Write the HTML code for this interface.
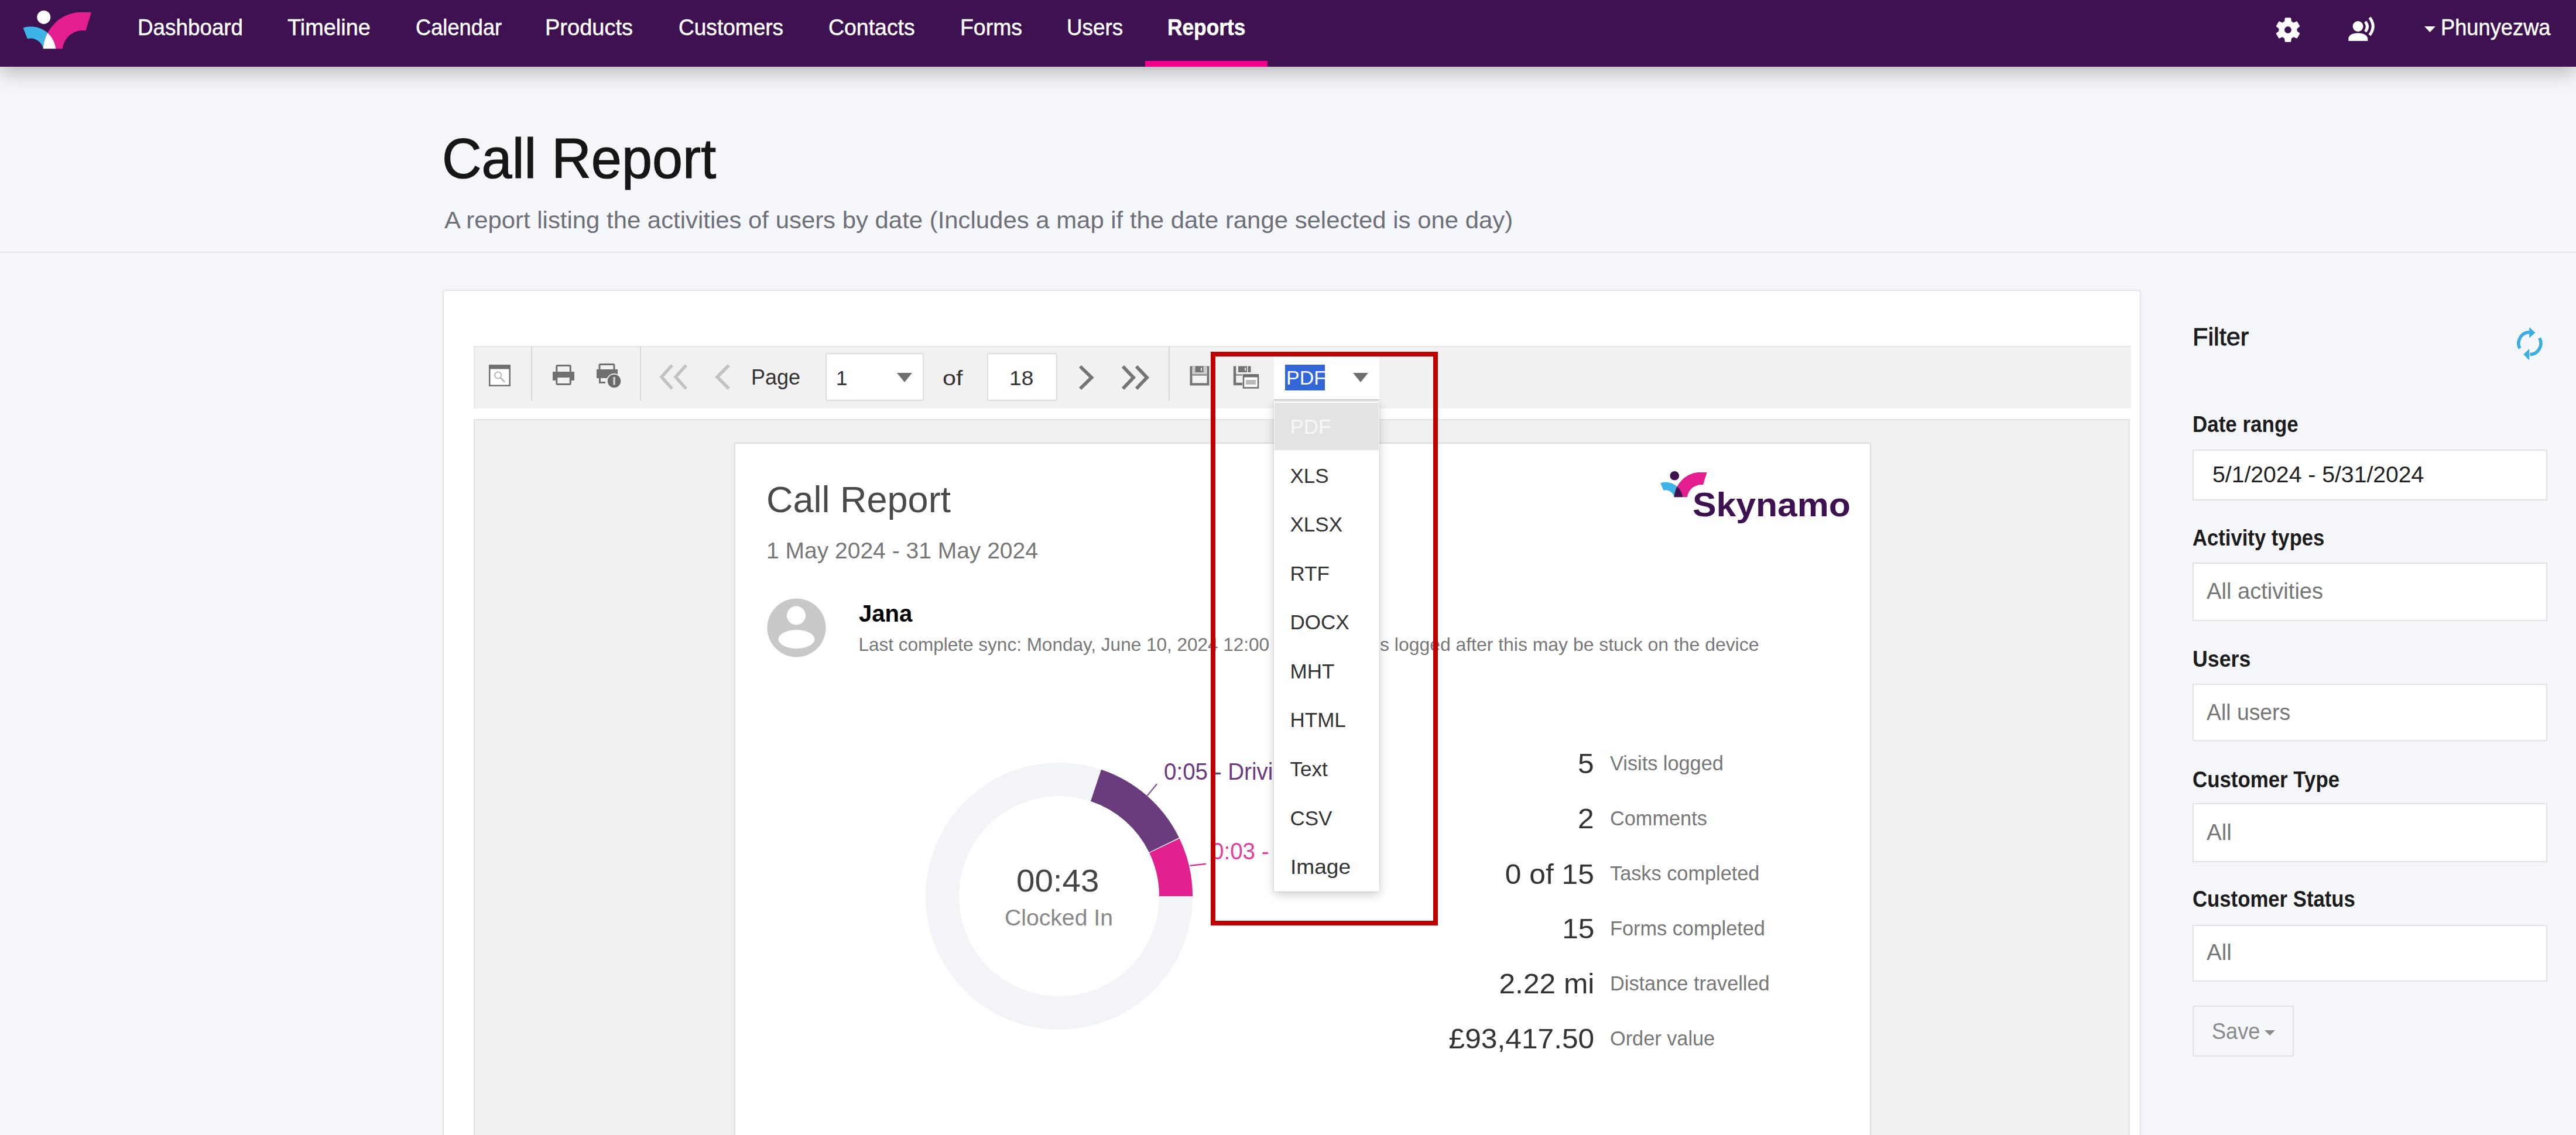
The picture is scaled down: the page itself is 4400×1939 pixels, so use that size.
<!DOCTYPE html>
<html><head><meta charset="utf-8">
<style>
html,body{margin:0;padding:0;width:4400px;height:1939px;overflow:hidden;background:#f5f6fa;font-family:"Liberation Sans",sans-serif;}
.a{position:absolute;white-space:nowrap;line-height:1;}
.sx{transform-origin:0 0;}
#nav{position:absolute;left:0;top:0;width:4400px;height:114px;background:#3e1150;box-shadow:0 7px 34px rgba(0,0,0,0.30);z-index:5;}
.nv{position:absolute;top:27.4px;font-size:39.5px;color:#fff;line-height:1;white-space:nowrap;transform-origin:0 0;-webkit-text-stroke:0.5px #fff;}
.lbl{position:absolute;left:3746px;font-size:38px;font-weight:bold;color:#1c1c1c;line-height:1;white-space:nowrap;transform-origin:0 0;}
.inp{position:absolute;left:3745px;width:606px;background:#fff;border:2px solid #e1e2e6;box-sizing:border-box;}
.inpt{position:absolute;font-size:38px;color:#767676;line-height:1;white-space:nowrap;transform-origin:0 0;}
.dd{position:absolute;left:2204px;font-size:35px;color:#333;line-height:1;white-space:nowrap;}
.st{position:absolute;font-size:43px;color:#333;line-height:1;white-space:nowrap;text-align:right;right:1680px;}
.sl{position:absolute;left:2750px;font-size:35px;color:#777;line-height:1;white-space:nowrap;}
</style></head>
<body>
<!-- NAV -->
<div id="nav">
  <svg class="a" style="left:0;top:0" width="180" height="113" viewBox="0 0 180 113">
    <defs><clipPath id="cbn"><path d="M39.4 47.6 A42.6 42.6 0 0 1 95.2 83.2 L73.8 83.2 A22 22 0 0 0 46.9 66.2 Z"/></clipPath></defs>
    <path d="M39.4 47.6 A42.6 42.6 0 0 1 95.2 83.2 L73.8 83.2 A22 22 0 0 0 46.9 66.2 Z" fill="#3db4e5"/>
    <path d="M73.8 83.2 A66.9 66.9 0 0 1 132.5 20.9 L156 20.9 L146.5 52.3 A35 35 0 0 0 106.7 83.2 Z" fill="#e51e90"/>
    <path d="M73.8 83.2 A66.9 66.9 0 0 1 132.5 20.9 L156 20.9 L146.5 52.3 A35 35 0 0 0 106.7 83.2 Z" fill="#fff" clip-path="url(#cbn)"/>
    <circle cx="74.8" cy="29.4" r="11.5" fill="#fff"/>
  </svg>
  <div class="nv" style="left:234.5px;transform:scaleX(0.9320)">Dashboard</div>
  <div class="nv" style="left:491px;transform:scaleX(0.9597)">Timeline</div>
  <div class="nv" style="left:710px;transform:scaleX(0.9183)">Calendar</div>
  <div class="nv" style="left:931px;transform:scaleX(0.9627)">Products</div>
  <div class="nv" style="left:1159px;transform:scaleX(0.9380)">Customers</div>
  <div class="nv" style="left:1415px;transform:scaleX(0.9478)">Contacts</div>
  <div class="nv" style="left:1640px;transform:scaleX(0.9478)">Forms</div>
  <div class="nv" style="left:1821.5px;transform:scaleX(0.9330)">Users</div>
  <div class="nv" style="left:1994px;font-weight:bold;transform:scaleX(0.8936)">Reports</div>
  <div class="a" style="left:1956px;top:104px;width:209px;height:10px;background:#ec008c"></div>
  <!-- gear -->
  <svg class="a" style="left:3882px;top:25px" width="52" height="52" viewBox="0 0 24 24">
    <path fill="#fff" d="M19.14 12.94c.04-.3.06-.61.06-.94 0-.32-.02-.64-.07-.94l2.03-1.58a.49.49 0 0 0 .12-.61l-1.92-3.32a.488.488 0 0 0-.59-.22l-2.39.96c-.5-.38-1.03-.7-1.62-.94l-.36-2.54a.484.484 0 0 0-.48-.41h-3.84c-.24 0-.43.17-.47.41l-.36 2.54c-.59.24-1.13.57-1.62.94l-2.39-.96c-.22-.08-.47 0-.59.22L2.74 8.87c-.12.21-.08.47.12.61l2.03 1.58c-.05.3-.09.63-.09.94s.02.64.07.94l-2.03 1.58a.49.49 0 0 0-.12.61l1.92 3.32c.12.22.37.29.59.22l2.39-.96c.5.38 1.03.7 1.62.94l.36 2.54c.05.24.24.41.48.41h3.84c.24 0 .44-.17.47-.41l.36-2.54c.59-.24 1.13-.56 1.62-.94l2.39.96c.22.08.47 0 .59-.22l1.92-3.32c.12-.22.07-.47-.12-.61l-2.01-1.58zM12 14.7c-1.49 0-2.7-1.21-2.7-2.7s1.21-2.7 2.7-2.7 2.7 1.21 2.7 2.7-1.21 2.7-2.7 2.7z"/>
  </svg>
  <!-- person voice -->
  <svg class="a" style="left:4008px;top:26px" width="52" height="48" viewBox="0 0 52 48">
    <circle cx="19.6" cy="19" r="9" fill="#fff"/>
    <path d="M3.3 44 L3.3 40 Q4 31 19.6 30.5 Q35 31 36.3 40 L36.3 44 Z" fill="#fff"/>
    <path d="M32 11 Q39 19.5 32 28" stroke="#fff" stroke-width="5" fill="none"/>
    <path d="M39.5 4 Q51 19 39.5 34" stroke="#fff" stroke-width="5" fill="none"/>
  </svg>
  <svg class="a" style="left:4141px;top:45px" width="20" height="11" viewBox="0 0 20 11"><path d="M0 0 L19 0 L9.5 10 Z" fill="#fff"/></svg>
  <div class="nv" style="left:4169px;transform:scaleX(0.9183)">Phunyezwa</div>
</div>

<!-- HEADER -->
<div class="a sx" style="left:755px;top:223px;font-size:96px;color:#161616;transform:scaleX(0.975);-webkit-text-stroke:1.2px #161616">Call Report</div>
<div class="a sx" style="left:759px;top:356px;font-size:40px;color:#6e7079;transform:scaleX(1.047)">A report listing the activities of users by date (Includes a map if the date range selected is one day)</div>
<div class="a" style="left:0;top:430px;width:4400px;height:2px;background:#e4e5e8"></div>

<!-- CARD -->
<div class="a" style="left:756px;top:495px;width:2901px;height:1500px;background:#fff;border:2px solid #e3e4e8;border-radius:5px;box-sizing:border-box"></div>

<!-- TOOLBAR -->
<div class="a" style="left:809px;top:591px;width:2831px;height:107px;background:#f1f1f1;border-top:2px solid #e4e5e7;border-left:2px solid #e4e5e7;box-sizing:border-box"></div>

<!-- toolbar contents -->
<div class="a" style="left:907px;top:593px;width:2px;height:92px;background:#d9d9d9"></div>
<div class="a" style="left:1093px;top:593px;width:2px;height:92px;background:#d9d9d9"></div>
<div class="a" style="left:1996px;top:593px;width:2px;height:92px;background:#d9d9d9"></div>
<svg class="a" style="left:835px;top:623px" width="37" height="37" viewBox="0 0 37 37">
  <rect x="1.25" y="1.25" width="34.5" height="34.5" fill="#fff" stroke="#707070" stroke-width="2.5"/>
  <rect x="0" y="0" width="37" height="7.5" fill="#707070"/>
  <circle cx="15.7" cy="18" r="5.6" fill="none" stroke="#b0b0b0" stroke-width="1.8"/>
  <path d="M19.6 22 L27 29.5" stroke="#b0b0b0" stroke-width="2.4"/>
</svg>
<svg class="a" style="left:944px;top:623px" width="37" height="35" viewBox="0 0 37 35">
  <rect x="6.8" y="1.5" width="23.5" height="13" rx="1.5" fill="none" stroke="#707070" stroke-width="3"/>
  <rect x="0" y="12" width="37" height="15" fill="#707070"/>
  <rect x="6.8" y="20.5" width="23.5" height="13" rx="1.5" fill="#f1f1f1" stroke="#707070" stroke-width="3"/>
</svg>
<svg class="a" style="left:1018px;top:619px" width="46" height="46" viewBox="0 0 46 46">
  <rect x="6" y="3.5" width="25" height="13" rx="1.5" fill="none" stroke="#707070" stroke-width="3"/>
  <rect x="1" y="12" width="36" height="15" fill="#707070"/>
  <path d="M6.5 23 L6.5 34.5 L16 34.5" fill="none" stroke="#707070" stroke-width="3"/>
  <circle cx="31" cy="32" r="13" fill="#f1f1f1"/>
  <circle cx="31" cy="32" r="11.2" fill="#6a6a6a"/>
  <rect x="29.3" y="25" width="3.6" height="13.5" fill="#d0d0d0"/>
</svg>
<svg class="a" style="left:1124px;top:622px" width="54" height="44" viewBox="0 0 54 44">
  <path d="M24 2 L6 22 L24 42" fill="none" stroke="#c2c2c2" stroke-width="5.5"/>
  <path d="M48 2 L30 22 L48 42" fill="none" stroke="#c2c2c2" stroke-width="5.5"/>
</svg>
<svg class="a" style="left:1218px;top:622px" width="32" height="44" viewBox="0 0 32 44">
  <path d="M27 2 L7 22 L27 42" fill="none" stroke="#c2c2c2" stroke-width="5.5"/>
</svg>
<div class="a" style="left:1283px;top:627px;font-size:36px;color:#333">Page</div>
<div class="a" style="left:1410px;top:603px;width:168px;height:82px;background:#fff;border:2px solid #dedede;border-radius:4px;box-sizing:border-box"></div>
<div class="a" style="left:1428px;top:628px;font-size:35px;color:#333">1</div>
<svg class="a" style="left:1532px;top:637px" width="26" height="16" viewBox="0 0 26 16"><path d="M0 0 L26 0 L13 16 Z" fill="#707070"/></svg>
<div class="a sx" style="left:1610px;top:628px;font-size:35px;color:#333;transform:scaleX(1.18)">of</div>
<div class="a" style="left:1686px;top:603px;width:120px;height:82px;background:#fff;border:2px solid #dedede;border-radius:4px;box-sizing:border-box"></div>
<div class="a sx" style="left:1723.5px;top:628px;font-size:35px;color:#333;transform:scaleX(1.06)">18</div>
<svg class="a" style="left:1840px;top:623px" width="32" height="44" viewBox="0 0 32 44">
  <path d="M5 3 L24.5 22 L5 41" fill="none" stroke="#757575" stroke-width="5.8"/>
</svg>
<svg class="a" style="left:1912px;top:623px" width="54" height="44" viewBox="0 0 54 44">
  <path d="M6 3 L24 22 L6 41" fill="none" stroke="#757575" stroke-width="5.8"/>
  <path d="M29 3 L47 22 L29 41" fill="none" stroke="#757575" stroke-width="5.8"/>
</svg>
<svg class="a" style="left:2032px;top:625px" width="34" height="34" viewBox="0 0 34 34">
  <rect x="2.5" y="2.5" width="29" height="29" fill="#f4f4f4" stroke="#747474" stroke-width="4"/>
  <rect x="4.5" y="0.5" width="25" height="14" fill="#cdcdcd"/>
  <rect x="9.5" y="0.5" width="14" height="10.5" fill="#747474"/>
  <rect x="19" y="3" width="2" height="5.5" fill="#e6e6e6"/>
  <rect x="4.5" y="14.5" width="25" height="2" fill="#747474"/>
</svg>
<svg class="a" style="left:2106px;top:625px" width="46" height="40" viewBox="0 0 46 40">
  <path d="M3 0.5 L3 31 L16 31" fill="none" stroke="#747474" stroke-width="4.5"/>
  <rect x="9" y="0.5" width="15" height="10.5" fill="#747474"/>
  <rect x="20" y="3" width="2" height="5.5" fill="#e6e6e6"/>
  <rect x="25.5" y="0.5" width="5" height="10.5" fill="#747474"/>
  <rect x="4" y="14.5" width="12" height="2" fill="#747474"/>
  <rect x="18" y="15.5" width="25" height="22" fill="#fff" stroke="#6e6e6e" stroke-width="2.5"/>
  <rect x="17" y="14.5" width="27" height="5" fill="#6e6e6e"/>
  <rect x="22" y="24" width="17" height="8" fill="#b8b8b8"/>
</svg>
<!-- export select -->
<div class="a" style="left:2176px;top:603px;width:180px;height:79px;background:#fff"></div>
<div class="a" style="left:2195px;top:623px;width:68px;height:44px;background:#3366d6"></div>
<div class="a" style="left:2197px;top:628px;font-size:34px;color:#fff">PDF</div>
<svg class="a" style="left:2311px;top:637px" width="26" height="16" viewBox="0 0 26 16"><path d="M0 0 L26 0 L13 16 Z" fill="#707070"/></svg>

<!-- VIEWER -->
<div class="a" style="left:809px;top:716px;width:2829px;height:1300px;background:#f0f0f0;border:2px solid #e2e3e6;box-sizing:border-box"></div>
<div class="a" style="left:1253.5px;top:755.5px;width:1942px;height:1300px;background:#fff;border:2px solid #dcdcdc;border-radius:3px;box-sizing:border-box;box-shadow:0 0 2px rgba(0,0,0,0.05)"></div>

<!-- REPORT PAGE CONTENT -->
<div class="a sx" style="left:1309.0px;top:822.1px;font-size:63px;color:#4a4a4a;">Call Report</div>
<div class="a sx" style="left:1309.0px;top:920.8px;font-size:39px;color:#777;">1 May 2024 - 31 May 2024</div>
<svg class="a" style="left:1310px;top:1022px" width="101" height="101" viewBox="0 0 101 101">
  <defs><clipPath id="avc"><circle cx="50.5" cy="50.5" r="50"/></clipPath></defs>
  <circle cx="50.5" cy="50.5" r="50" fill="#c8c8c8"/>
  <g clip-path="url(#avc)">
    <circle cx="50" cy="29.5" r="16" fill="#fff"/>
    <ellipse cx="50.5" cy="70" rx="31" ry="16" fill="#fff"/>
  </g>
</svg>
<div class="a sx" style="left:1467.0px;top:1027.6px;font-size:40px;color:#000;font-weight:bold;">Jana</div>
<div class="a sx" style="left:1466.5px;top:1086.3px;font-size:31.5px;color:#777;">Last complete sync: Monday, June 10, 2024 12:00</div>
<div class="a sx" style="left:2356.5px;top:1086.3px;font-size:31.5px;color:#777;transform:scaleX(1.013);">s logged after this may be stuck on the device</div>
<!-- skynamo logo -->
<svg class="a" style="left:2826px;top:796px" width="100" height="60" viewBox="0 0 100 60">
  <defs><clipPath id="cbr"><path d="M39.4 47.6 A42.6 42.6 0 0 1 95.2 83.2 L73.8 83.2 A22 22 0 0 0 46.9 66.2 Z"/></clipPath></defs>
  <g transform="translate(-16.59 -3.21) scale(0.68)">
    <path d="M39.4 47.6 A42.6 42.6 0 0 1 95.2 83.2 L73.8 83.2 A22 22 0 0 0 46.9 66.2 Z" fill="#3db4e5"/>
    <path d="M73.8 83.2 A66.9 66.9 0 0 1 132.5 20.9 L156 20.9 L146.5 52.3 A35 35 0 0 0 106.7 83.2 Z" fill="#e51e90"/>
    <path d="M73.8 83.2 A66.9 66.9 0 0 1 132.5 20.9 L156 20.9 L146.5 52.3 A35 35 0 0 0 106.7 83.2 Z" fill="#3e1150" clip-path="url(#cbr)"/>
    <circle cx="74.8" cy="29.4" r="11.5" fill="#3e1150"/>
  </g>
</svg>
<div class="a sx" style="left:2891.0px;top:834.3px;font-size:57px;color:#3e1150;font-weight:bold;transform:scaleX(1.065);">Skynamo</div>
<!-- donut -->
<svg class="a" style="left:1560px;top:1280px" width="600" height="500" viewBox="1560 1280 600 500">
  <circle cx="1809" cy="1531" r="199.5" fill="none" stroke="#f3f4f8" stroke-width="57"/>
  <path id="arcP" d="" fill="#6a3b7d"/>
  <path id="arcK" d="" fill="#e3208f"/>
  <path d="M1959.4 1359.6 L1976.1 1339.3" stroke="#7d5590" stroke-width="2.2"/>
  <path d="M2032.5 1478.9 L2059.8 1475.9" stroke="#e3208f" stroke-width="2.2"/>
</svg>
<div class="a sx" style="left:1987.5px;top:1297.6px;font-size:41px;color:#6a3b7d;transform:scaleX(0.94);">0:05 - Driving</div>
<div class="a sx" style="left:2069.0px;top:1434.2px;font-size:41px;color:#e0409a;transform:scaleX(0.94);">0:03 - Break</div>
<div class="a sx" style="left:1736.0px;top:1477.6px;font-size:53px;color:#444;transform:scaleX(1.066);">00:43</div>
<div class="a sx" style="left:1715.5px;top:1548.5px;font-size:38px;color:#888;transform:scaleX(1.03);">Clocked In</div>
<!-- stats -->
<div class="a" style="right:1677px;top:1281.4px;font-size:48px;color:#333;text-align:right;transform:scaleX(1.035);transform-origin:100% 0;">5</div>
<div class="a sx" style="left:2750.0px;top:1286.5px;font-size:34.3px;color:#777;">Visits logged</div>
<div class="a" style="right:1677px;top:1375.4px;font-size:48px;color:#333;text-align:right;transform:scaleX(1.035);transform-origin:100% 0;">2</div>
<div class="a sx" style="left:2750.0px;top:1380.5px;font-size:34.3px;color:#777;">Comments</div>
<div class="a" style="right:1677px;top:1469.9px;font-size:48px;color:#333;text-align:right;transform:scaleX(1.035);transform-origin:100% 0;">0 of 15</div>
<div class="a sx" style="left:2750.0px;top:1475.0px;font-size:34.3px;color:#777;">Tasks completed</div>
<div class="a" style="right:1677px;top:1563.4px;font-size:48px;color:#333;text-align:right;transform:scaleX(1.035);transform-origin:100% 0;">15</div>
<div class="a sx" style="left:2750.0px;top:1568.5px;font-size:34.3px;color:#777;">Forms completed</div>
<div class="a" style="right:1677px;top:1657.4px;font-size:48px;color:#333;text-align:right;transform:scaleX(1.035);transform-origin:100% 0;">2.22 mi</div>
<div class="a sx" style="left:2750.0px;top:1662.5px;font-size:34.3px;color:#777;">Distance travelled</div>
<div class="a" style="right:1677px;top:1751.4px;font-size:48px;color:#333;text-align:right;transform:scaleX(1.035);transform-origin:100% 0;">£93,417.50</div>
<div class="a sx" style="left:2750.0px;top:1756.5px;font-size:34.3px;color:#777;">Order value</div>
<!-- DROPDOWN -->
<div class="a" style="left:2176px;top:682px;width:180px;height:2px;background:#d6d6d6"></div>
<div class="a" style="left:2176px;top:686px;width:180px;height:837px;background:#fff;box-shadow:0 0 1.5px rgba(0,0,0,0.22),0 5px 16px rgba(0,0,0,0.20)"></div>
<div class="a" style="left:2177px;top:688px;width:178px;height:81px;background:#e3e3e3"></div>
<div class="a sx" style="left:2203.5px;top:711.1px;font-size:35px;color:#f7f7f7;">PDF</div>
<div class="a sx" style="left:2203.5px;top:794.6px;font-size:35px;color:#333;">XLS</div>
<div class="a sx" style="left:2203.5px;top:878.2px;font-size:35px;color:#333;">XLSX</div>
<div class="a sx" style="left:2203.5px;top:961.7px;font-size:35px;color:#333;">RTF</div>
<div class="a sx" style="left:2203.5px;top:1045.3px;font-size:35px;color:#333;">DOCX</div>
<div class="a sx" style="left:2203.5px;top:1128.8px;font-size:35px;color:#333;">MHT</div>
<div class="a sx" style="left:2203.5px;top:1212.4px;font-size:35px;color:#333;">HTML</div>
<div class="a sx" style="left:2203.5px;top:1295.9px;font-size:35px;color:#333;">Text</div>
<div class="a sx" style="left:2203.5px;top:1379.5px;font-size:35px;color:#333;">CSV</div>
<div class="a sx" style="left:2203.5px;top:1463.0px;font-size:35px;color:#333;;transform:scaleX(1.06)">Image</div>
<!-- RED BOX -->
<div class="a" style="left:2068px;top:601px;width:388px;height:980px;border:8px solid #c00000;box-sizing:border-box"></div>
<!-- FILTER PANEL -->
<div class="a sx" style="left:3744.5px;top:555.2px;font-size:42px;color:#1c1c1c;transform:scaleX(1.03);-webkit-text-stroke:0.9px #1c1c1c;">Filter</div>
<svg class="a" style="left:4296px;top:555px" width="50" height="64" viewBox="0 0 50 64">
  <path d="M7.97 40.23 A19 19 0 0 1 24.5 12.6" fill="none" stroke="#3aaee3" stroke-width="5.5"/>
  <path d="M24.2 4.1 L34.4 13.3 L24.2 22.4 Z" fill="#3aaee3"/>
  <path d="M41.58 22.51 A19 19 0 0 1 25.3 50.6" fill="none" stroke="#3aaee3" stroke-width="5.5"/>
  <path d="M24.2 40.7 L14.3 50.6 L24.2 60.5 Z" fill="#3aaee3"/>
</svg>
<div class="a sx" style="left:3745.0px;top:706.4px;font-size:38px;color:#1c1c1c;font-weight:bold;transform:scaleX(0.92);">Date range</div>
<div class="a sx" style="left:3745.0px;top:899.8px;font-size:38px;color:#1c1c1c;font-weight:bold;transform:scaleX(0.912);">Activity types</div>
<div class="a sx" style="left:3745.0px;top:1106.9px;font-size:38px;color:#1c1c1c;font-weight:bold;transform:scaleX(0.94);">Users</div>
<div class="a sx" style="left:3745.0px;top:1312.8px;font-size:38px;color:#1c1c1c;font-weight:bold;transform:scaleX(0.917);">Customer Type</div>
<div class="a sx" style="left:3745.0px;top:1516.8px;font-size:38px;color:#1c1c1c;font-weight:bold;transform:scaleX(0.914);">Customer Status</div>
<div class="inp" style="top:768px;height:87px"></div>
<div class="inp" style="top:960.5px;height:100.5px"></div>
<div class="inp" style="top:1168px;height:98px"></div>
<div class="inp" style="top:1372px;height:101px"></div>
<div class="inp" style="top:1579.5px;height:97.5px"></div>
<div class="a sx" style="left:3779.0px;top:792.4px;font-size:38.5px;color:#222;transform:scaleX(1.017);">5/1/2024 - 5/31/2024</div>
<div class="a sx" style="left:3769.0px;top:990.8px;font-size:38.5px;color:#767676;transform:scaleX(0.99);">All activities</div>
<div class="a sx" style="left:3769.0px;top:1197.5px;font-size:38.5px;color:#767676;transform:scaleX(0.97);">All users</div>
<div class="a sx" style="left:3769.0px;top:1403.2px;font-size:38.5px;color:#767676;">All</div>
<div class="a sx" style="left:3769.0px;top:1608.4px;font-size:38.5px;color:#767676;">All</div>
<div class="a" style="left:3745px;top:1718px;width:173px;height:87px;background:#f5f6fa;border:2px solid #e1e2e6;border-radius:3px;box-sizing:border-box"></div>
<div class="a sx" style="left:3778.0px;top:1742.8px;font-size:38px;color:#8a8a8a;transform:scaleX(0.95);">Save</div>
<svg class="a" style="left:3868px;top:1760px" width="18" height="10" viewBox="0 0 18 10"><path d="M0 0 L18 0 L9 9 Z" fill="#8a8a8a"/></svg>
<script>
(function(){
 function pt(a,r){var t=(a-90)*Math.PI/180;return [1809+r*Math.cos(t),1531+r*Math.sin(t)];}
 function arc(a0,a1,R,r){var p0=pt(a0,R),p1=pt(a1,R),q1=pt(a1,r),q0=pt(a0,r);
  return 'M'+p0+' A'+R+' '+R+' 0 0 1 '+p1+' L'+q1+' A'+r+' '+r+' 0 0 0 '+q0+' Z';}
 document.getElementById('arcP').setAttribute('d',arc(18.4,64.0,228,171));
 document.getElementById('arcK').setAttribute('d',arc(64.4,90,228,171));
})();
</script>
<!--END-->
</body></html>
